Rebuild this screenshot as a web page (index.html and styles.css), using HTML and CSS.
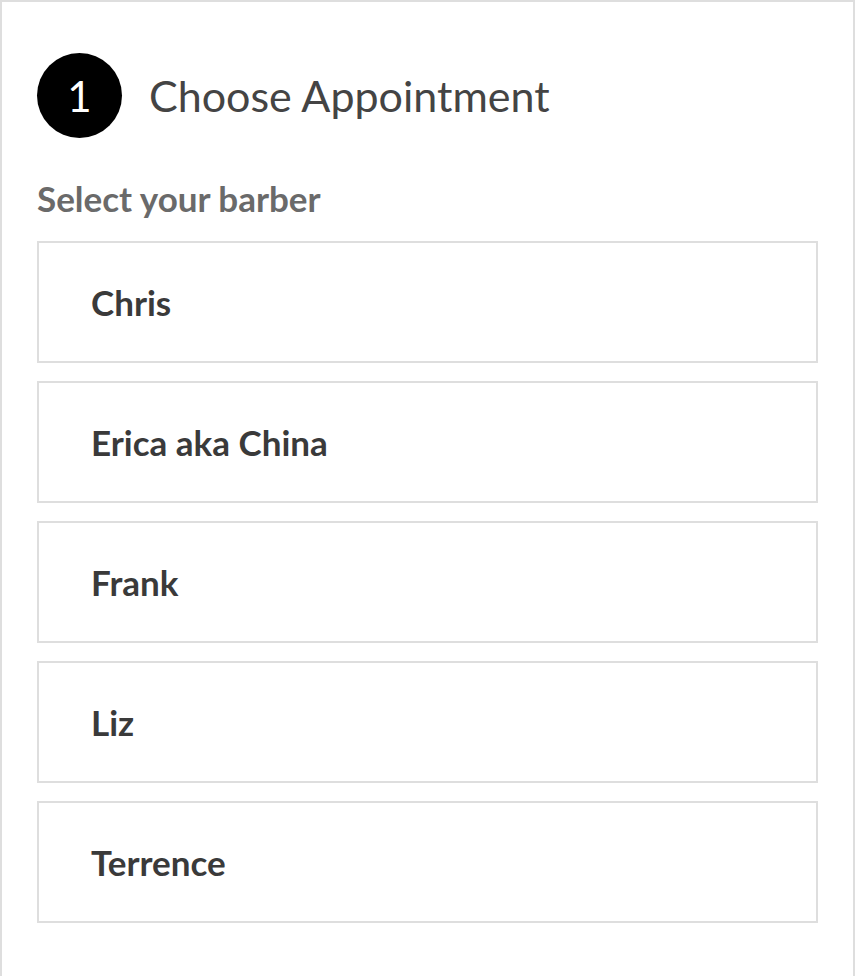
FILE: index.html
```html
<!DOCTYPE html>
<html lang="en">
<head>
    <meta charset="UTF-8">
    <meta name="viewport" content="width=device-width, initial-scale=1.0">
    <title>Choose Appointment</title>
    <link rel="stylesheet" href="styles.css">
</head>
<body>
    <div class="panel">
        <div class="step-header">
            <span class="step-num">1</span>
            <h1 class="step-title">Choose Appointment</h1>
        </div>

        <h2 class="field-label">Select your barber</h2>

        <ul class="barber-list">
            <li class="barber">Chris</li>
            <li class="barber">Erica aka China</li>
            <li class="barber">Frank</li>
            <li class="barber">Liz</li>
            <li class="barber">Terrence</li>
        </ul>
    </div>
</body>
</html>
```

FILE: styles.css
```css
body {
    margin: 0;
    font-family: Lato, "Open Sans", sans-serif;
    background-color: #fff;
}
.panel {
    height: 976px;
    box-sizing: border-box;
    border: 2px solid #dedede;
    border-bottom: none;
    padding: 51px 35px 0 35px;
}
.step-header {
    display: flex;
    align-items: center;
    gap: 27px;
}
.step-num {
    width: 85px;
    height: 85px;
    border-radius: 50%;
    background-color: #000;
    color: #fff;
    display: flex;
    align-items: center;
    justify-content: center;
    font-size: 42px;
    font-weight: 400;
}
.step-title {
    margin: 0;
    font-size: 43px;
    font-weight: 400;
    color: #444;
}
.field-label {
    margin: 40px 0 0 0;
    font-size: 35px;
    font-weight: 700;
    color: #6a6a6a;
    line-height: 40px;
}
.barber-list {
    list-style: none;
    margin: 23px 0 0 0;
    padding: 0;
    display: flex;
    flex-direction: column;
    gap: 18px;
}
.barber {
    height: 122px;
    box-sizing: border-box;
    border: 2px solid #dedede;
    padding-left: 52px;
    display: flex;
    align-items: center;
    font-size: 35px;
    font-weight: 700;
    color: #3a3a3a;
}
```
